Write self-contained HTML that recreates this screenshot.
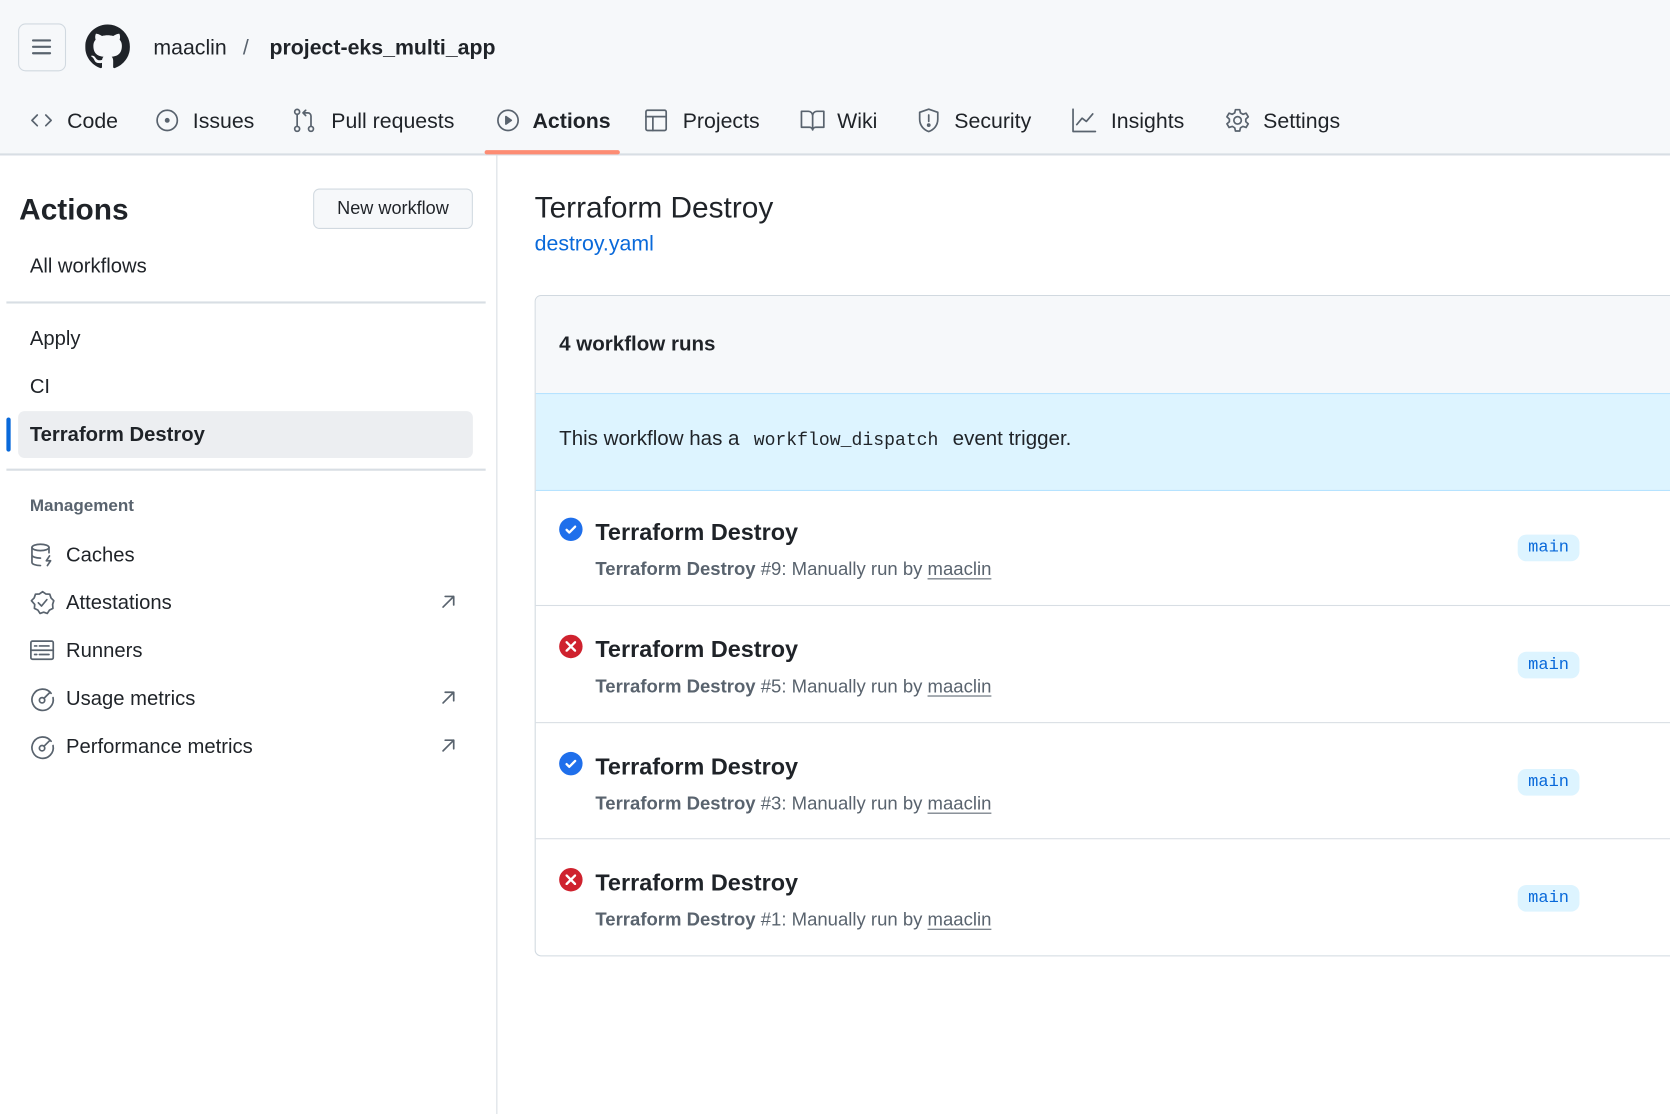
<!DOCTYPE html>
<html><head><meta charset="utf-8"><style>
*{box-sizing:border-box;margin:0;padding:0}
html,body{width:1670px;height:1112px;overflow:hidden;background:#fff;font-family:"Liberation Sans",sans-serif;color:#1f2328}
#w{position:absolute;left:0;top:0;width:1568px;height:1044px;transform:scale(1.06505);transform-origin:0 0}
.a{position:absolute;white-space:nowrap}
svg{position:absolute;fill:none;stroke:#59636e;stroke-width:1.6;stroke-linecap:round;stroke-linejoin:round}
.hd{position:absolute;left:0;top:0;width:1568px;height:146px;background:#f6f8fa;border-bottom:2px solid #d8dee4}
.tab{font-size:20px;top:103px;color:#1f2328}
.si{font-size:19px}
.row{position:absolute;left:503px;width:1070px;height:109px;border-top:1px solid #d8dee4}
.row .t{position:absolute;left:56px;top:28px;font-size:22px;font-weight:bold;white-space:nowrap}
.row .s{position:absolute;left:56px;top:65px;font-size:17.4px;color:#59636e;white-space:nowrap}
.row .s b{font-weight:bold}
.row .s u{text-decoration:underline;text-underline-offset:3px}
.row .bd{position:absolute;left:922px;top:43px;width:58px;height:25px;background:#ddf4ff;border-radius:8px;color:#0969da;font-family:"Liberation Mono",monospace;font-size:16px;text-align:center;line-height:25px}
.row .ic{position:absolute;left:22px;top:27px;width:22px;height:22px;border-radius:50%}
</style></head><body><div id="w">
<div class="hd"></div>
<div class="a" style="left:17px;top:22px;width:45px;height:45px;border:1px solid #d1d9e0;border-radius:7px"></div>
<svg style="left:28px;top:33px" width="22" height="22" viewBox="0 0 22 22"><path d="M3 5h16M3 11h16M3 17h16" stroke="#59636e" stroke-width="2"/></svg>
<svg style="left:80px;top:23px;stroke:none" width="42" height="42" viewBox="0 0 16 16"><path fill="#1f2328" d="M8 0C3.58 0 0 3.58 0 8c0 3.54 2.290 6.53 5.47 7.59.4.07.55-.17.55-.38 0-.19-.01-.82-.01-1.49-2.01.37-2.53-.49-2.690-.94-.09-.23-.48-.94-.82-1.13-.28-.15-.68-.52-.01-.53.63-.01 1.08.58 1.23.82.72 1.21 1.87.87 2.33.66.07-.52.28-.87.51-1.07-1.78-.2-3.640-.89-3.640-3.95 0-.87.31-1.59.82-2.15-.08-.2-.36-1.02.08-2.12 0 0 .67-.21 2.2.82.64-.18 1.32-.27 2-.27.68 0 1.36.09 2 .27 1.53-1.04 2.2-.82 2.2-.82.44 1.1.16 1.92.08 2.12.51.56.82 1.27.82 2.15 0 3.07-1.87 3.75-3.65 3.95.29.25.54.73.54 1.48 0 1.07-.01 1.93-.01 2.2 0 .21.15.46.55.38A8.013 8.013 0 0016 8c0-4.42-3.58-8-8-8z"/></svg>
<div class="a" style="left:144px;top:34px;font-size:20px">maaclin</div>
<div class="a" style="left:228px;top:34px;font-size:20px;color:#59636e">/</div>
<div class="a" style="left:253px;top:34px;font-size:20px;font-weight:bold">project-eks_multi_app</div>
<!-- tabs -->
<svg style="left:28px;top:102px" width="22" height="22" viewBox="0 0 22 22"><path d="M7 6l-5 5 5 5M15 6l5 5-5 5"/></svg>
<div class="a tab" style="left:63px">Code</div>
<svg style="left:146px;top:102px" width="22" height="22" viewBox="0 0 22 22"><circle cx="11" cy="11" r="9.5"/><circle cx="11" cy="11" r="1.5" fill="#59636e"/></svg>
<div class="a tab" style="left:181px">Issues</div>
<svg style="left:275px;top:101px" width="22" height="24" viewBox="0 0 22 24"><circle cx="4" cy="4" r="2.3"/><circle cx="4" cy="20" r="2.3"/><circle cx="17" cy="20" r="2.3"/><path d="M4 6.5v11M17 17.5V8a3 3 0 00-3-3h-4M12 2.5L9.5 5 12 7.5"/></svg>
<div class="a tab" style="left:311px">Pull requests</div>
<svg style="left:466px;top:102px" width="22" height="22" viewBox="0 0 22 22"><circle cx="11" cy="11" r="9.5"/><path d="M9 7.5v7l5-3.5z" fill="#59636e"/></svg>
<div class="a tab" style="left:500px;font-weight:bold">Actions</div>
<div class="a" style="left:455px;top:141px;width:127px;height:4px;background:#fd8c73;border-radius:2px"></div>
<svg style="left:605px;top:102px" width="22" height="22" viewBox="0 0 22 22"><rect x="1.5" y="1.5" width="19" height="19" rx="1.5"/><path d="M1.5 7.5h19M8 7.5v13"/></svg>
<div class="a tab" style="left:641px">Projects</div>
<svg style="left:751px;top:102px" width="24" height="22" viewBox="0 0 24 22"><path d="M1.5 2.5h6.5a4 4 0 014 4V20a3 3 0 00-3-2.5H1.5zM22.5 2.5H16a4 4 0 00-4 4V20a3 3 0 013-2.5h7.5z"/></svg>
<div class="a tab" style="left:786px">Wiki</div>
<svg style="left:861px;top:101px" width="22" height="24" viewBox="0 0 22 24"><path d="M11 1.5l8.5 3v6.5c0 6-4 10-8.5 11.5C6.5 21 2.5 17 2.5 11V4.5z"/><path d="M11 7v6"/><circle cx="11" cy="16.5" r="1" fill="#59636e"/></svg>
<div class="a tab" style="left:896px">Security</div>
<svg style="left:1006px;top:101px" width="24" height="24" viewBox="0 0 24 24"><path d="M1.5 1.5v21h21M5 16l5-6 4 3 6-7"/></svg>
<div class="a tab" style="left:1043px">Insights</div>
<svg style="left:1150px;top:101px" width="24" height="24" viewBox="0 0 24 24"><circle cx="12" cy="12" r="3.5"/><path d="M10 2h4l.7 3 2.3 1.3 3-1 2 3.4-2.3 2.1v2.4l2.3 2.1-2 3.4-3-1-2.3 1.3-.7 3h-4l-.7-3L7 17.700l-3 1-2-3.4 2.3-2.1v-2.4L2 8.7l2-3.4 3 1L9.3 5z"/></svg>
<div class="a tab" style="left:1186px">Settings</div>
<!-- sidebar -->
<div class="a" style="left:466px;top:146px;width:1px;height:900px;background:#d8dee4"></div>
<div class="a" style="left:18px;top:181px;font-size:28px;font-weight:bold">Actions</div>
<div class="a" style="left:294px;top:177px;width:150px;height:38px;border:1px solid #d1d9e0;border-radius:6px;background:#f6f8fa;font-size:17px;text-align:center;line-height:36px">New workflow</div>
<div class="a si" style="left:28px;top:240px">All workflows</div>
<div class="a" style="left:6px;top:283px;width:450px;height:2px;background:#d8dee4"></div>
<div class="a si" style="left:28px;top:308px">Apply</div>
<div class="a si" style="left:28px;top:353px">CI</div>
<div class="a" style="left:17px;top:386px;width:427px;height:44px;background:#eceef1;border-radius:6px"></div>
<div class="a" style="left:6px;top:392px;width:4px;height:32px;background:#0969da;border-radius:2px"></div>
<div class="a si" style="left:28px;top:398px;font-weight:bold">Terraform Destroy</div>
<div class="a" style="left:6px;top:440px;width:450px;height:2px;background:#d8dee4"></div>
<div class="a" style="left:28px;top:467px;font-size:16px;font-weight:bold;color:#59636e">Management</div>
<svg style="left:28px;top:509px" width="24" height="24" viewBox="0 0 24 24"><ellipse cx="10" cy="5" rx="8" ry="3"/><path d="M2 5v14c0 1.7 3.6 3 8 3M18 5v5M2 12c0 1.7 3.6 3 8 3M18.5 13l-3 4.5h4l-3 4.5"/></svg>
<div class="a si" style="left:62px;top:511px">Caches</div>
<svg style="left:28px;top:554px" width="24" height="24" viewBox="0 0 24 24"><path d="M12 1.5l3 2.2 3.7.2 1.2 3.5 2.6 2.6-1.1 3.5.3 3.7-3.3 1.7-2 3.1-3.4-1.2-3.4 1.2-2-3.1-3.3-1.7.3-3.7L1.5 10l2.6-2.6 1.2-3.5L9 3.7z"/><path d="M8 12l3 3 5-6"/></svg>
<div class="a si" style="left:62px;top:556px">Attestations</div>
<svg style="left:28px;top:600px" width="24" height="22" viewBox="0 0 24 22"><rect x="1" y="2" width="21" height="17" rx="1.5"/><path d="M1 10.5h21M4.5 6.5h2M9 6.5h9M4.5 14.5h2M9 14.5h9"/></svg>
<div class="a si" style="left:62px;top:601px">Runners</div>
<svg style="left:28px;top:645px" width="24" height="24" viewBox="0 0 24 24"><path d="M20 6A10 10 0 1021.8 10"/><circle cx="11.5" cy="12.5" r="2.5"/><path d="M13.5 10.5L19 5"/></svg>
<div class="a si" style="left:62px;top:646px">Usage metrics</div>
<svg style="left:28px;top:690px" width="24" height="24" viewBox="0 0 24 24"><path d="M20 6A10 10 0 1021.8 10"/><circle cx="11.5" cy="12.5" r="2.5"/><path d="M13.5 10.5L19 5"/></svg>
<div class="a si" style="left:62px;top:691px">Performance metrics</div>
<svg style="left:414px;top:558px" width="14" height="14" viewBox="0 0 14 14"><path d="M2 12L12 2M4 2h8v8"/></svg>
<svg style="left:414px;top:648px" width="14" height="14" viewBox="0 0 14 14"><path d="M2 12L12 2M4 2h8v8"/></svg>
<svg style="left:414px;top:693px" width="14" height="14" viewBox="0 0 14 14"><path d="M2 12L12 2M4 2h8v8"/></svg>
<!-- main -->
<div class="a" style="left:502px;top:179px;font-size:28px">Terraform Destroy</div>
<div class="a" style="left:502px;top:218px;font-size:20px;color:#0969da">destroy.yaml</div>
<div class="a" style="left:502px;top:277px;width:1080px;height:621px;border:1px solid #d1d9e0;border-radius:6px;background:#fff;overflow:hidden">
 <div style="position:absolute;left:0;top:0;width:100%;height:91px;background:#f6f8fa"></div>
 <div class="a" style="left:22px;top:35px;font-size:19.3px;font-weight:bold">4 workflow runs</div>
 <div style="position:absolute;left:0;top:91px;width:100%;height:92px;background:#ddf4ff;border-top:1px solid #b6e3ff;border-bottom:1px solid #b6e3ff"></div>
 <div class="a" style="left:22px;top:124px;font-size:19.3px">This workflow has a <span style="font-family:'Liberation Mono',monospace;font-size:17px;padding:0 8px">workflow_dispatch</span> event trigger.</div>
</div>
<div class="row" style="top:459px;border-top:none">
 <div class="ic" style="background:#1f6feb"><svg style="left:5px;top:5px;stroke:#fff;stroke-width:2.2" width="12" height="12" viewBox="0 0 12 12"><path d="M2 6.5l2.5 2.5L10 3.5"/></svg></div>
 <div class="t">Terraform Destroy</div>
 <div class="s"><b>Terraform Destroy</b> #9: Manually run by <u>maaclin</u></div>
 <div class="bd">main</div></div>
<div class="row" style="top:568px">
 <div class="ic" style="background:#cf222e"><svg style="left:6px;top:6px;stroke:#fff;stroke-width:2.2" width="10" height="10" viewBox="0 0 10 10"><path d="M1 1l8 8M9 1L1 9"/></svg></div>
 <div class="t">Terraform Destroy</div>
 <div class="s"><b>Terraform Destroy</b> #5: Manually run by <u>maaclin</u></div>
 <div class="bd">main</div></div>
<div class="row" style="top:678px">
 <div class="ic" style="background:#1f6feb"><svg style="left:5px;top:5px;stroke:#fff;stroke-width:2.2" width="12" height="12" viewBox="0 0 12 12"><path d="M2 6.5l2.5 2.5L10 3.5"/></svg></div>
 <div class="t">Terraform Destroy</div>
 <div class="s"><b>Terraform Destroy</b> #3: Manually run by <u>maaclin</u></div>
 <div class="bd">main</div></div>
<div class="row" style="top:787px">
 <div class="ic" style="background:#cf222e"><svg style="left:6px;top:6px;stroke:#fff;stroke-width:2.2" width="10" height="10" viewBox="0 0 10 10"><path d="M1 1l8 8M9 1L1 9"/></svg></div>
 <div class="t">Terraform Destroy</div>
 <div class="s"><b>Terraform Destroy</b> #1: Manually run by <u>maaclin</u></div>
 <div class="bd">main</div></div>
</div></body></html>
